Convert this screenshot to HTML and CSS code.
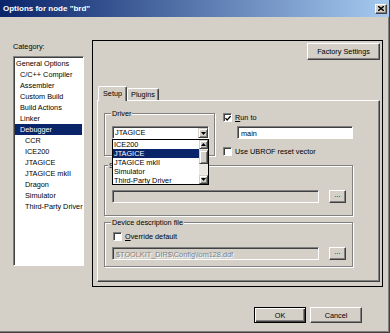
FILE: index.html
```html
<!DOCTYPE html>
<html lang="en">
<head>
  <meta charset="UTF-8">
  <title>Options for node "brd"</title>
  <link rel="stylesheet" href="styles.css">
</head>
<body>
  <div class="window">
    <div class="titlebar">
      <span class="title">Options for node "brd"</span>
      <span class="close-btn">
        <svg width="6" height="5" viewBox="0 0 6 5"><path d="M0 0L6 5M6 0L0 5" stroke="#000" stroke-width="1.4"/></svg>
      </span>
    </div>

    <div class="content">
      <div class="category">
        <div class="category-label">Category:</div>
        <ul class="category-list">
          <li>General Options</li>
          <li class="lvl1">C/C++ Compiler</li>
          <li class="lvl1">Assembler</li>
          <li class="lvl1">Custom Build</li>
          <li class="lvl1">Build Actions</li>
          <li class="lvl1">Linker</li>
          <li class="lvl1 selected">Debugger</li>
          <li class="lvl2">CCR</li>
          <li class="lvl2">ICE200</li>
          <li class="lvl2">JTAGICE</li>
          <li class="lvl2">JTAGICE mkII</li>
          <li class="lvl2">Dragon</li>
          <li class="lvl2">Simulator</li>
          <li class="lvl2">Third-Party Driver</li>
        </ul>
      </div>

      <div class="frame">
        <div class="frame-top">
          <button class="btn factory">Factory Settings</button>
        </div>

        <div class="tabs">
          <span class="tab active">Setup</span>
          <span class="tab">Plugins</span>
        </div>

        <div class="page">
          <div class="page-top">
            <fieldset class="group driver">
              <legend>Driver</legend>
              <div class="combo">
                <span class="combo-value">JTAGICE</span>
                <span class="combo-btn">
                  <svg width="5" height="3" viewBox="0 0 5 3"><path d="M0 0H5L2.5 3Z" fill="#000"/></svg>
                </span>
              </div>
            </fieldset>

            <div class="run-col">
              <label class="check-row">
                <span class="check">
                  <svg width="7" height="7" viewBox="0 0 7 7"><path d="M0.5 3L2.5 5.2L6.5 0.8" fill="none" stroke="#000" stroke-width="1.5"/></svg>
                </span>
                <span><u>R</u>un to</span>
              </label>
              <div class="field run-field">main</div>
              <label class="check-row ubrof">
                <span class="check"></span>
                <span>Use UBROF reset vector</span>
              </label>
            </div>
          </div>

          <fieldset class="group macros">
            <legend>S</legend>
            <div class="check-row">
              <span class="check"></span>
            </div>
            <div class="file-row">
              <div class="field disabled"></div>
              <button class="btn browse">...</button>
            </div>
          </fieldset>

          <fieldset class="group device">
            <legend>Device description file</legend>
            <label class="check-row">
              <span class="check"></span>
              <span><u>O</u>verride default</span>
            </label>
            <div class="file-row">
              <div class="field disabled">$TOOLKIT_DIR$\Config\iom128.ddf</div>
              <button class="btn browse">...</button>
            </div>
          </fieldset>

          <!-- open combo list, drawn over the groups -->
          <div class="dropdown">
            <ul class="dropdown-items">
              <li>ICE200</li>
              <li class="selected">JTAGICE</li>
              <li>JTAGICE mkII</li>
              <li>Simulator</li>
              <li>Third-Party Driver</li>
            </ul>
            <div class="scrollbar">
              <span class="scroll-btn">
                <svg width="5" height="3" viewBox="0 0 5 3"><path d="M0 3H5L2.5 0Z" fill="#000"/></svg>
              </span>
              <span class="scroll-track"><span class="scroll-thumb"></span></span>
              <span class="scroll-btn">
                <svg width="5" height="3" viewBox="0 0 5 3"><path d="M0 0H5L2.5 3Z" fill="#000"/></svg>
              </span>
            </div>
          </div>
        </div>
      </div>
    </div>

    <div class="actions">
      <button class="btn default">OK</button>
      <button class="btn">Cancel</button>
    </div>
  </div>
</body>
</html>
```

FILE: styles.css
```css
* {
  margin: 0;
  padding: 0;
  box-sizing: border-box;
}

body {
  font-family: "Liberation Sans", Arial, sans-serif;
  font-size: 7.3px;
  color: #000;
  background-color: #d4d0c8;
}

ul {
  list-style: none;
}

.window {
  width: 390px;
  height: 333px;
  background-color: #d4d0c8;
  border-right: 1px solid #404040;
  border-bottom: 1px solid #404040;
  box-shadow: inset -1px -1px 0 #808080;
  display: flex;
  flex-direction: column;
}

/* Title bar */
.titlebar {
  height: 17px;
  flex-shrink: 0;
  display: flex;
  align-items: center;
  justify-content: space-between;
  padding: 0 2px 0 3px;
  background: linear-gradient(to right, #0a246a, #a6caf0);
  color: #fff;
}

.title {
  font-size: 8px;
  font-weight: bold;
}

.close-btn {
  width: 12px;
  height: 10px;
  display: flex;
  align-items: center;
  justify-content: center;
  background-color: #d4d0c8;
  border: 1px solid;
  border-color: #fff #404040 #404040 #fff;
  box-shadow: inset -1px -1px 0 #808080;
}

/* Main area */
.content {
  display: flex;
  gap: 8px;
  padding: 23px 5px 0 13px;
}

.category {
  width: 71px;
  flex-shrink: 0;
}

.category-label {
  padding-top: 2px;
  line-height: 9px;
  margin-bottom: 5px;
}

.category-list {
  height: 210px;
  background-color: #fff;
  border: 1px solid;
  border-color: #808080 #fff #fff #808080;
  box-shadow: inset 1px 1px 0 #404040;
  padding: 1px 1px 0 1px;
}

.category-list li {
  line-height: 11px;
  padding-left: 1px;
  white-space: nowrap;
}

.category-list .lvl1 {
  padding-left: 5px;
}

.category-list .lvl2 {
  padding-left: 10px;
}

.category-list .selected {
  background-color: #0a246a;
  color: #fff;
}

/* Right hand frame */
.frame {
  width: 291px;
  height: 247px;
  border: 1px solid #000;
  display: flex;
  flex-direction: column;
}

.frame-top {
  display: flex;
  justify-content: flex-end;
  padding: 2px 2px 0 0;
}

.btn {
  font-family: inherit;
  font-size: 7.3px;
  color: #000;
  background-color: #d4d0c8;
  border: 1px solid;
  border-color: #fff #404040 #404040 #fff;
  box-shadow: inset -1px -1px 0 #808080;
  cursor: pointer;
}

.factory {
  width: 73px;
  height: 17px;
}

/* Tabs */
.tabs {
  display: flex;
  align-items: flex-end;
  height: 14px;
  margin: 26px 0 0 5px;
}

.tab {
  height: 12px;
  line-height: 11px;
  padding: 0 3px;
  border-top: 1px solid #fff;
  border-left: 1px solid #fff;
  border-right: 1px solid #404040;
  box-shadow: inset -1px 0 0 #808080;
  border-radius: 2px 2px 0 0;
}

.tab.active {
  height: 15px;
  line-height: 13px;
  padding: 0 4px;
  margin-bottom: -1px;
  background-color: #d4d0c8;
  position: relative;
  z-index: 1;
}

.page {
  flex: 1;
  margin: 0 2px 4px 4px;
  border: 1px solid;
  border-color: #fff #404040 #404040 #fff;
  box-shadow: inset -1px -1px 0 #808080;
  padding: 8px 0 0 6px;
  position: relative;
}

.page-top {
  display: flex;
  gap: 8px;
}

/* Group boxes */
.group {
  border: 1px solid #808080;
  box-shadow: inset 1px 1px 0 #fff, 1px 1px 0 #fff;
  padding: 0 6px 0 7px;
  min-width: 0;
  margin: 0;
}

.group legend {
  line-height: 9px;
  padding: 0 1px;
  margin-left: -1px;
  background-color: #d4d0c8;
}

.driver {
  width: 111px;
  padding-bottom: 9px;
}

.macros {
  width: 249px;
  margin-top: 5px;
  padding-bottom: 12px;
}

.macros legend {
  margin-left: -4px;
}

.device {
  width: 249px;
  margin-top: 2px;
  padding-bottom: 6px;
}

.combo {
  margin-top: 8px;
  width: 97px;
  height: 13px;
  display: flex;
  background-color: #fff;
  border: 1px solid;
  border-color: #808080 #fff #fff #808080;
  box-shadow: inset 1px 1px 0 #404040;
  padding: 1px 0 0 1px;
}

.combo-value {
  flex: 1;
  line-height: 10px;
  padding-left: 1px;
}

.combo-btn {
  width: 10px;
  height: 10px;
  display: flex;
  align-items: center;
  justify-content: center;
  background-color: #d4d0c8;
  border: 1px solid;
  border-color: #d4d0c8 #404040 #404040 #d4d0c8;
  box-shadow: inset 1px 1px 0 #fff, inset -1px -1px 0 #808080;
}

.run-col {
  width: 130px;
  padding-top: 4px;
}

.check-row {
  display: flex;
  align-items: center;
  gap: 3px;
  height: 9px;
  line-height: 9px;
}

.check {
  width: 9px;
  height: 9px;
  flex-shrink: 0;
  display: flex;
  align-items: center;
  justify-content: center;
  background-color: #fff;
  border: 1px solid;
  border-color: #808080 #fff #fff #808080;
  box-shadow: inset 1px 1px 0 #404040;
  padding: 1px 0 0 1px;
}

.field {
  height: 13px;
  line-height: 11px;
  padding: 1px 3px 0;
  background-color: #fff;
  border: 1px solid;
  border-color: #808080 #fff #fff #808080;
  box-shadow: inset 1px 1px 0 #404040;
  white-space: nowrap;
  overflow: hidden;
}

.field.disabled {
  background-color: #d4d0c8;
  color: #808080;
  text-shadow: 1px 1px 0 #fff;
}

.run-field {
  width: 116px;
  margin: 4px 0 0 14px;
}

.ubrof {
  margin-top: 8px;
}

.macros .check-row {
  margin-top: 4px;
}

.device .check-row {
  margin: 5px 0 0 1px;
}

.file-row {
  display: flex;
  gap: 10px;
  margin-top: 7px;
}

.device .file-row {
  margin-top: 6px;
}

.file-row .field {
  width: 208px;
}

.browse {
  width: 17px;
  height: 13px;
  line-height: 8px;
  padding-bottom: 3px;
}

/* Open combo list */
.dropdown {
  position: absolute;
  left: 14px;
  top: 38px;
  width: 97px;
  height: 46px;
  display: flex;
  background-color: #fff;
  border: 1px solid #000;
  z-index: 2;
}

.dropdown-items {
  flex: 1;
}

.dropdown-items li {
  line-height: 9px;
  height: 9px;
  padding-left: 1px;
  white-space: nowrap;
}

.dropdown-items .selected {
  background-color: #0a246a;
  color: #fff;
}

.scrollbar {
  width: 9px;
  display: flex;
  flex-direction: column;
}

.scroll-btn {
  height: 9px;
  display: flex;
  align-items: center;
  justify-content: center;
  background-color: #d4d0c8;
  border: 1px solid;
  border-color: #d4d0c8 #404040 #404040 #d4d0c8;
  box-shadow: inset 1px 1px 0 #fff, inset -1px -1px 0 #808080;
}

.scroll-track {
  flex: 1;
  background-color: #ebe9e4;
  padding-top: 1px;
}

.scroll-thumb {
  display: block;
  height: 14px;
  background-color: #d4d0c8;
  border: 1px solid;
  border-color: #d4d0c8 #404040 #404040 #d4d0c8;
  box-shadow: inset 1px 1px 0 #fff, inset -1px -1px 0 #808080;
}

/* Bottom buttons */
.actions {
  display: flex;
  justify-content: flex-end;
  gap: 4px;
  margin-top: 20px;
  padding-right: 27px;
}

.actions .btn {
  width: 52px;
  height: 16px;
}

.actions .default {
  border-color: #000;
  box-shadow: inset 1px 1px 0 #fff, inset -1px -1px 0 #404040, inset -2px -2px 0 #808080;
}
```
